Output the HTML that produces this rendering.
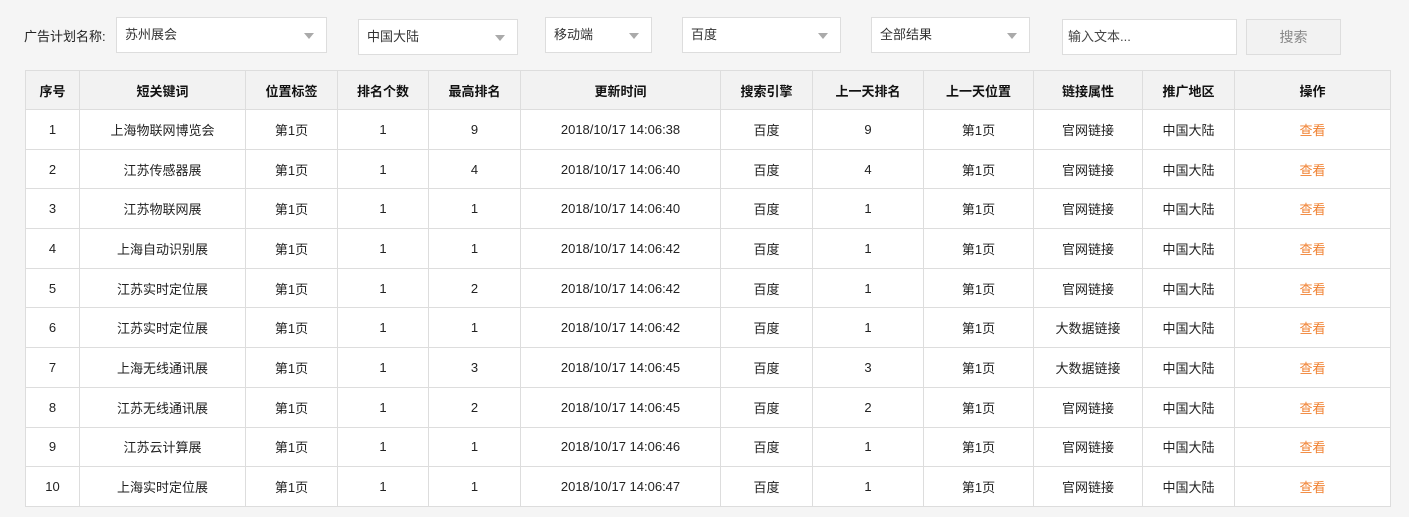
<!DOCTYPE html>
<html><head><meta charset="utf-8"><style>
*{margin:0;padding:0;box-sizing:border-box}
body{width:1409px;height:517px;background:#f5f5f5;font-family:"Liberation Sans","Noto Sans CJK SC",sans-serif;font-size:13px;color:#222;position:relative;overflow:hidden}
.lbl{position:absolute;left:24px;top:28px;font-size:13px;line-height:18px}
.sel{position:absolute;background:#fff;border:1px solid #ddd;height:36px;line-height:34px;padding-left:8px;color:#333}
.sel:after{content:"";position:absolute;right:12px;top:15px;border-left:5px solid transparent;border-right:5px solid transparent;border-top:6px solid #aaa}
.inp{position:absolute;left:1062px;top:19px;width:175px;height:36px;background:#fff;border:1px solid #ddd;line-height:34px;padding-left:5px;color:#444}
.btn{position:absolute;left:1246px;top:19px;width:95px;height:36px;background:#f2f2f2;border:1px solid #ddd;line-height:34px;text-align:center;color:#888;font-size:14px}
table{position:absolute;left:25px;top:70px;border-collapse:collapse;background:#fff}
td,th{border:1px solid #ddd;text-align:center;height:39.7px;padding:0;font-size:13px}
th{background:#f2f2f2;font-weight:bold;color:#111;height:39px}
.o{color:#f08030}
</style></head><body>
<div class="lbl">广告计划名称:</div>
<div class="sel" style="left:116px;top:17px;width:211px">苏州展会</div>
<div class="sel" style="left:358px;top:19px;width:160px">中国大陆</div>
<div class="sel" style="left:545px;top:17px;width:107px">移动端</div>
<div class="sel" style="left:682px;top:17px;width:159px">百度</div>
<div class="sel" style="left:871px;top:17px;width:159px">全部结果</div>
<div class="inp">输入文本...</div>
<div class="btn">搜索</div>
<table>
<colgroup><col style="width:54px"><col style="width:166px"><col style="width:92px"><col style="width:91px"><col style="width:92px"><col style="width:200px"><col style="width:92px"><col style="width:111px"><col style="width:110px"><col style="width:109px"><col style="width:92px"><col style="width:156px"></colgroup>
<tr><th>序号</th><th>短关键词</th><th>位置标签</th><th>排名个数</th><th>最高排名</th><th>更新时间</th><th>搜索引擎</th><th>上一天排名</th><th>上一天位置</th><th>链接属性</th><th>推广地区</th><th>操作</th></tr>
<tr><td>1</td><td>上海物联网博览会</td><td>第1页</td><td>1</td><td>9</td><td>2018/10/17 14:06:38</td><td>百度</td><td>9</td><td>第1页</td><td>官网链接</td><td>中国大陆</td><td class="o">查看</td></tr>
<tr><td>2</td><td>江苏传感器展</td><td>第1页</td><td>1</td><td>4</td><td>2018/10/17 14:06:40</td><td>百度</td><td>4</td><td>第1页</td><td>官网链接</td><td>中国大陆</td><td class="o">查看</td></tr>
<tr><td>3</td><td>江苏物联网展</td><td>第1页</td><td>1</td><td>1</td><td>2018/10/17 14:06:40</td><td>百度</td><td>1</td><td>第1页</td><td>官网链接</td><td>中国大陆</td><td class="o">查看</td></tr>
<tr><td>4</td><td>上海自动识别展</td><td>第1页</td><td>1</td><td>1</td><td>2018/10/17 14:06:42</td><td>百度</td><td>1</td><td>第1页</td><td>官网链接</td><td>中国大陆</td><td class="o">查看</td></tr>
<tr><td>5</td><td>江苏实时定位展</td><td>第1页</td><td>1</td><td>2</td><td>2018/10/17 14:06:42</td><td>百度</td><td>1</td><td>第1页</td><td>官网链接</td><td>中国大陆</td><td class="o">查看</td></tr>
<tr><td>6</td><td>江苏实时定位展</td><td>第1页</td><td>1</td><td>1</td><td>2018/10/17 14:06:42</td><td>百度</td><td>1</td><td>第1页</td><td>大数据链接</td><td>中国大陆</td><td class="o">查看</td></tr>
<tr><td>7</td><td>上海无线通讯展</td><td>第1页</td><td>1</td><td>3</td><td>2018/10/17 14:06:45</td><td>百度</td><td>3</td><td>第1页</td><td>大数据链接</td><td>中国大陆</td><td class="o">查看</td></tr>
<tr><td>8</td><td>江苏无线通讯展</td><td>第1页</td><td>1</td><td>2</td><td>2018/10/17 14:06:45</td><td>百度</td><td>2</td><td>第1页</td><td>官网链接</td><td>中国大陆</td><td class="o">查看</td></tr>
<tr><td>9</td><td>江苏云计算展</td><td>第1页</td><td>1</td><td>1</td><td>2018/10/17 14:06:46</td><td>百度</td><td>1</td><td>第1页</td><td>官网链接</td><td>中国大陆</td><td class="o">查看</td></tr>
<tr><td>10</td><td>上海实时定位展</td><td>第1页</td><td>1</td><td>1</td><td>2018/10/17 14:06:47</td><td>百度</td><td>1</td><td>第1页</td><td>官网链接</td><td>中国大陆</td><td class="o">查看</td></tr>
</table>
</body></html>
